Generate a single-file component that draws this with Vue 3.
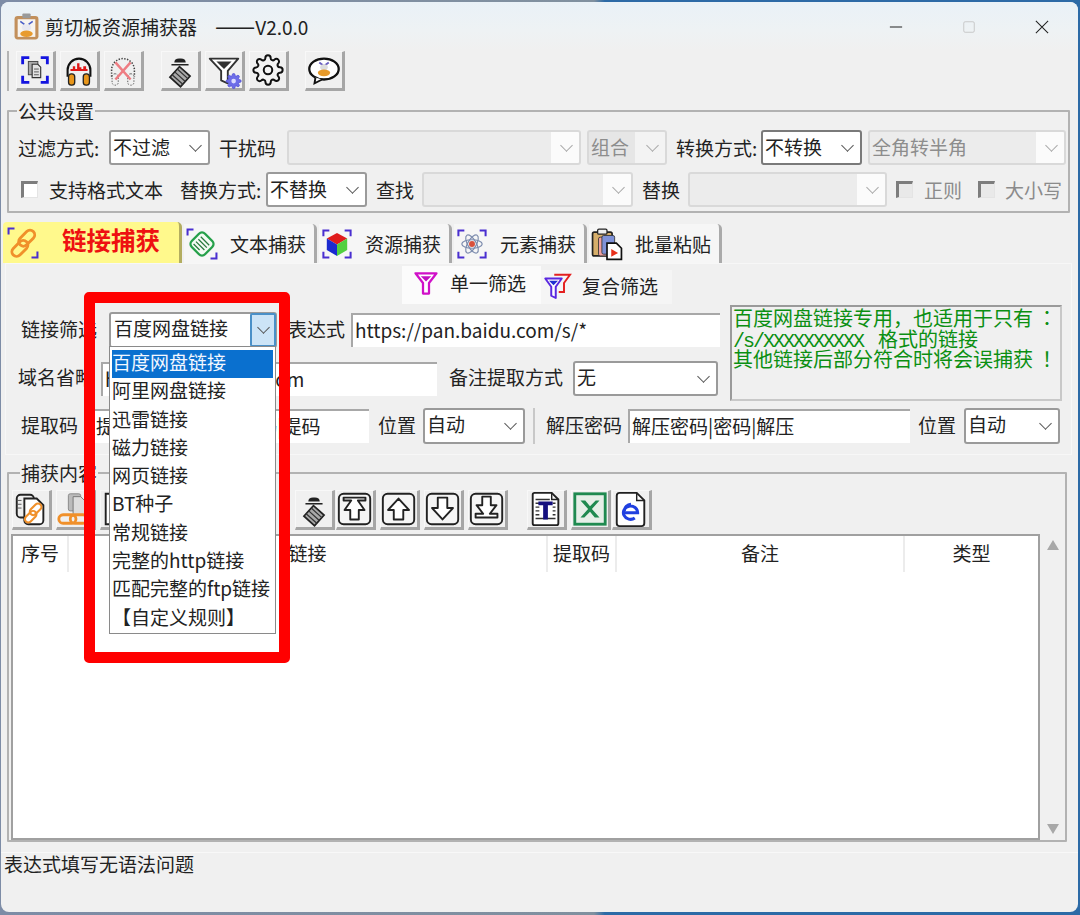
<template>
  <div class="desktop">
    <div class="window">
      <div class="titlebar">
        <svg class="logo" viewBox="0 0 24 26" v-html="icons.logo"></svg>
        <span class="app-name">剪切板资源捕获器</span>
        <span class="version"><span class="dash">——</span>V2.0.0</span>
        <div class="win-controls">
          <svg viewBox="0 0 16 16"><path d="M1 8h14" stroke="#222" stroke-width="1.2" /></svg>
          <svg viewBox="0 0 16 16"><rect x="2" y="2" width="12" height="12" rx="1.5" fill="none" stroke="#c4c4c4" /></svg>
          <svg viewBox="0 0 16 16"><path d="M1 1l14 14M15 1L1 15" stroke="#222" stroke-width="1.2" /></svg>
        </div>
      </div>

      <div class="toolbar top-tools">
        <i class="grip"></i>
        <button v-for="b in topTools" :key="b.icon" class="tool" :class="{ sep: b.sep }">
          <svg viewBox="0 0 40 40" v-html="icons[b.icon]"></svg>
        </button>
      </div>

      <fieldset class="group common">
        <legend>公共设置</legend>
        <div class="row">
          <span class="lb w85">过滤方式:</span>
          <div class="sel w101">不过滤</div>
          <span class="lb w65 ind3">干扰码</span>
          <div class="sel off w294"></div>
          <div class="sel off combo w80"><em>组合</em></div>
          <span class="lb w82 ind3">转换方式:</span>
          <div class="sel w101 dark">不转换</div>
          <div class="sel off w198"><em>全角转半角</em></div>
        </div>
        <div class="row second">
          <i class="check"></i>
          <span class="lb w130 ind5">支持格式文本</span>
          <span class="lb w80">替换方式:</span>
          <div class="sel w101">不替换</div>
          <span class="lb w43 ind3">查找</span>
          <div class="sel off w211"></div>
          <span class="lb w43 ind3">替换</span>
          <div class="sel off w199"></div>
          <i class="check off"></i>
          <span class="lb w48 ind5 dim">正则</span>
          <i class="check off"></i>
          <span class="lb w62 ind4 dim">大小写</span>
        </div>
      </fieldset>

      <div class="tabs">
        <div class="tab active">
          <svg viewBox="0 0 40 40" v-html="icons.tabLink"></svg>
          <span>链接捕获</span>
        </div>
        <div v-for="t in tabs" :key="t.label" class="tab">
          <svg viewBox="0 0 40 40" v-html="icons[t.icon]"></svg>
          <span>{{ t.label }}</span>
        </div>
      </div>

      <section class="panel">
        <div class="subtabs">
          <div class="subtab on">
            <svg viewBox="0 0 40 40" v-html="icons.funnel"></svg>
            <span>单一筛选</span>
          </div>
          <div class="subtab">
            <svg viewBox="0 0 40 40" v-html="icons.funnels"></svg>
            <span>复合筛选</span>
          </div>
        </div>

        <div class="filter-top">
          <div class="filter-left">
            <div class="row">
              <span class="lb w84 ind2">链接筛选</span>
              <div class="sel focused w168">百度网盘链接</div>
              <span class="lb w62 ind5">表达式</span>
              <div class="input w369">https://pan.baidu.com/s/*</div>
            </div>
            <div class="row mid">
              <span class="lb w77">域名省略</span>
              <div class="input slim w336">https://pan.baidu.com</div>
              <span class="lb w124 ind6">备注提取方式</span>
              <div class="sel w145">无</div>
            </div>
          </div>
          <div class="hint">
            <p>百度网盘链接专用，也适用于只有<span class="tc">：</span></p>
            <p><span class="mono">/s/XXXXXXXXXX </span><span class="nudge">格式的链接</span></p>
            <p>其他链接后部分符合时将会误捕获<span class="tc">！</span></p>
          </div>
        </div>

        <div class="row third">
          <span class="lb w67 ind2">提取码</span>
          <div class="input w277">提取码|访问码|验证码|提码</div>
          <span class="lb w42 ind3">位置</span>
          <div class="sel w102">自动</div>
          <i class="divider"></i>
          <span class="lb w81 ind5">解压密码</span>
          <div class="input w282">解压密码|密码|解压</div>
          <span class="lb w42 ind2">位置</span>
          <div class="sel w96">自动</div>
        </div>
      </section>

      <fieldset class="group captured">
        <legend>捕获内容</legend>
        <div class="toolbar list-tools">
          <button v-for="(b, i) in listTools" :key="i" class="tool" :class="b.cls">
            <svg viewBox="0 0 40 40" v-html="icons[b.icon]"></svg>
          </button>
        </div>
        <div class="table-wrap">
          <div class="table">
            <div class="thead">
              <span>序号</span>
              <span>链接</span>
              <span>提取码</span>
              <span>备注</span>
              <span>类型</span>
            </div>
          </div>
          <div class="scrollbar">
            <i class="arrow up"></i>
            <i class="arrow down"></i>
          </div>
        </div>
      </fieldset>

      <div class="status">表达式填写无语法问题</div>
    </div>

    <ul class="popup">
      <li v-for="(item, i) in options" :key="item" :class="{ selected: i === 0 }">{{ item }}</li>
    </ul>
    <div class="callout"></div>
  </div>
</template>

<script setup>
const brackets = (c = '#4a2fd0') =>
  `<path d="M4 11V4h7M29 4h7v7M36 29v7h-7M11 36H4v-7" fill="none" stroke="${c}" stroke-width="2.4"/>`

// the link and text tabs only carry the top-left and bottom-right marks
const halfBrackets = (c = '#4a2fd0') =>
  `<path d="M3 10V3h7M37 30v7h-7" fill="none" stroke="${c}" stroke-width="2.4"/>`

const gear =
  'M19.4 15a1.65 1.65 0 0 0 .33 1.82l.06.06a2 2 0 0 1 0 2.83 2 2 0 0 1-2.83 0l-.06-.06a1.65 1.65 0 0 0-1.82-.33 1.65 1.65 0 0 0-1 1.51V21a2 2 0 0 1-2 2 2 2 0 0 1-2-2v-.09A1.65 1.65 0 0 0 9 19.4a1.65 1.65 0 0 0-1.82.33l-.06.06a2 2 0 0 1-2.83 0 2 2 0 0 1 0-2.83l.06-.06a1.65 1.65 0 0 0 .33-1.82 1.65 1.65 0 0 0-1.51-1H3a2 2 0 0 1-2-2 2 2 0 0 1 2-2h.09A1.65 1.65 0 0 0 4.6 9a1.65 1.65 0 0 0-.33-1.82l-.06-.06a2 2 0 0 1 0-2.83 2 2 0 0 1 2.83 0l.06.06a1.65 1.65 0 0 0 1.82.33H9a1.65 1.65 0 0 0 1-1.51V3a2 2 0 0 1 2-2 2 2 0 0 1 2 2v.09a1.65 1.65 0 0 0 1 1.51 1.65 1.65 0 0 0 1.82-.33l.06-.06a2 2 0 0 1 2.83 0 2 2 0 0 1 0 2.83l-.06.06a1.65 1.65 0 0 0-.33 1.82V9a1.65 1.65 0 0 0 1.51 1H21a2 2 0 0 1 2 2 2 2 0 0 1-2 2h-.09a1.65 1.65 0 0 0-1.51 1z'

const links = (c = '#f0902a') =>
  `<g fill="none" stroke="${c}" stroke-width="3.4"><rect x="5" y="21" width="22" height="11" rx="5.500" transform="rotate(-45 16 26)"/><rect x="13" y="9" width="22" height="11" rx="5.500" transform="rotate(-45 24 14)"/></g>`

const eraser = `<path d="M14 12q0-4 5-4h2q5 0 5 4z" fill="#222"/><path d="M11 14.5h18" stroke="#222" stroke-width="1.6"/>
  <g transform="rotate(42 20 27)"><rect x="12.5" y="19.5" width="15" height="15" fill="#a9a9a9" stroke="#222" stroke-width="1.8"/><path d="M12.5 23h15M12.5 27h15M12.5 31h15" stroke="#333" stroke-width="1.3"/></g>`

const frame = (d) =>
  `<rect x="3" y="4" width="33" height="32" rx="5" fill="#f5f5f5" stroke="#222" stroke-width="2"/><path d="${d}" fill="#fff" stroke="#222" stroke-width="2" stroke-linejoin="round"/>`

const icons = {
  logo: `<rect x="0.5" y="3" width="23" height="22.5" rx="3" fill="#c2905c"/><rect x="3.5" y="6" width="17" height="17" fill="#f7f4f0"/>
    <rect x="8" y="0.5" width="8" height="4.5" rx="1" fill="#9a9a9a"/><path d="M6 8l4 3M18 8l-4 3" stroke="#4c60c8" stroke-width="1.6"/>
    <ellipse cx="12" cy="14" rx="4.5" ry="3.2" fill="#e8e8f0"/><ellipse cx="12" cy="20" rx="6" ry="3.2" fill="#e89b2e"/>`,
  capture: `<path d="M7 14V7h7M26 7h7v7M33 26v7h-7M14 33H7v-7" fill="none" stroke="#1414e0" stroke-width="3"/>
    <rect x="13" y="11" width="10" height="14" fill="#aaa" stroke="#444"/><path d="M17 14h6l3 3v11H17z" fill="#e2e2e2" stroke="#333" stroke-width="1.2"/>
    <path d="M19 19h5M19 22h5M19 25h5" stroke="#555"/>`,
  phones: `<path d="M8 27V20a12 12 0 0 1 24 0v7" fill="none" stroke="#111" stroke-width="2.2"/>
    <path d="M11 21h18v-2h-1.500v-3h-3v3h-2v-2h-2v-4h-2.500v6h-2v-3h-2.500v3H11z" fill="#e01818"/>
    <rect x="9" y="24" width="6.500" height="12" rx="3" fill="#e8961a" stroke="#222" stroke-width="1.400"/><rect x="24.500" y="24" width="6.500" height="12" rx="3" fill="#e8961a" stroke="#222" stroke-width="1.400"/>`,
  phonesOff: `<path d="M8 27V20a12 12 0 0 1 24 0v7" fill="none" stroke="#444" stroke-width="1.600" stroke-dasharray="1.500 1.500"/>
    <rect x="8.500" y="24" width="6.500" height="12" rx="3" fill="none" stroke="#555" stroke-dasharray="1.500 1.500"/><rect x="25" y="24" width="6.500" height="12" rx="3" fill="none" stroke="#555" stroke-dasharray="1.500 1.500"/>
    <path d="M12 12l16 18M28 12L12 30" stroke="#ee7c82" stroke-width="2.600"/>`,
  eraser,
  filterGear: `<path d="M5 8h30L24 21v13l-7-3V21z" fill="#fff" stroke="#333" stroke-width="2" stroke-linejoin="round"/><path d="M12 11h16l-8 8z" fill="#333"/>
    <g transform="translate(21.500 23) scale(.72)"><path d="${gear}" fill="#6d6de8" stroke="#5454d8" stroke-width="1.200"/><circle cx="12" cy="12" r="3.400" fill="#dcdcff"/></g>`,
  gear: `<g transform="translate(3.200 3.200) scale(1.400)"><path d="${gear}" fill="#f4f4f4" stroke="#111" stroke-width="1.500"/><circle cx="12" cy="12" r="3.200" fill="none" stroke="#111" stroke-width="1.500"/></g>`,
  bubble: `<ellipse cx="20" cy="19" rx="15.500" ry="11" fill="#fff" stroke="#111" stroke-width="2.400"/><path d="M11 28l-1 6 8-4" fill="#fff" stroke="#111" stroke-width="2"/>
    <path d="M15 12l4 3M25 12l-4 3" stroke="#6a5fc0" stroke-width="2"/><ellipse cx="20" cy="17" rx="4" ry="3" fill="#ddd"/><ellipse cx="20" cy="23" rx="6.500" ry="3.500" fill="#e79a2a"/>`,
  tabLink: halfBrackets() + links(),
  tabText: `${halfBrackets()}<g transform="rotate(45 20 20)"><rect x="9" y="9" width="22" height="22" rx="5" fill="#f4fbf4" stroke="#26a04a" stroke-width="2.800"/><path d="M13 15h14M13 19h14M13 23h14M13 27h10" stroke="#2a7a3e" stroke-width="1.500"/></g>`,
  tabCube: `${brackets()}<path d="M20 7l12 6.500-12 7-12-7z" fill="#e01c1c"/><path d="M8 13.500l12 7V34L8 27z" fill="#1b2bd0"/><path d="M32 13.500l-12 7V34l12-7z" fill="#52d040"/>`,
  tabAtom: `${brackets()}<g fill="none" stroke="#7d8cae" stroke-width="1.400"><ellipse cx="20" cy="20" rx="12" ry="5"/><ellipse cx="20" cy="20" rx="12" ry="5" transform="rotate(60 20 20)"/><ellipse cx="20" cy="20" rx="12" ry="5" transform="rotate(120 20 20)"/></g><circle cx="20" cy="20" r="3.500" fill="#d8503c"/>`,
  tabPaste: `<rect x="3" y="6" width="23" height="28" rx="2" fill="#d6ae6a" stroke="#222" stroke-width="2"/><rect x="9" y="2.500" width="11" height="6" rx="1.500" fill="#eee" stroke="#222" stroke-width="1.500"/>
    <rect x="10" y="12" width="15" height="22" rx="2" fill="#f0a0a0" stroke="#333"/><rect x="14" y="10" width="15" height="22" rx="2" fill="#7f92d8" stroke="#333"/>
    <path d="M20 19h11l6 6v13H20z" fill="#fff" stroke="#111" stroke-width="2"/><path d="M25 26l8 4.500-8 4.500z" fill="#e8301c"/>`,
  funnel: `<path d="M6 7h28L24 20v14l-8 0V20z" fill="#fff" stroke="#d010c8" stroke-width="3" stroke-linejoin="round"/><path d="M13 11h14l-7 7z" fill="#c010c0"/>`,
  funnels: `<path d="M15 5h21l-8 11v12h-7" fill="none" stroke="#e42020" stroke-width="2.600"/><path d="M3 10h22l-8 11v15l-6-3V21z" fill="#fff" stroke="#5a28e0" stroke-width="2.600" stroke-linejoin="round"/><path d="M8 13h12l-6 6z" fill="#2030d0"/>`,
  copyLink: `<rect x="5" y="5" width="18" height="24" rx="4" fill="#eee" stroke="#222" stroke-width="2"/><path d="M5 11h5M5 15h5M5 19h5" stroke="#555"/>
    <path d="M13 9h13l7 7v16a4 4 0 0 1-4 4H17a4 4 0 0 1-4-4z" fill="#fff" stroke="#222" stroke-width="2"/>
    <g transform="translate(9 11) scale(.65)">${links()}</g>`,
  copyLine: `<rect x="13" y="4" width="13" height="18" rx="2" fill="#bbb" stroke="#888"/><path d="M18 7h8l5 5v14H18z" fill="#ddd" stroke="#777"/>
    <g fill="none" stroke="#f0902a" stroke-width="3"><rect x="3" y="26" width="18" height="9" rx="4.500"/><rect x="15" y="26" width="18" height="9" rx="4.500"/></g>`,
  doc: `<path d="M6 4h20l8 8v24H6z" fill="#fff" stroke="#222" stroke-width="2"/>`,
  top: frame('M8 8h23v3h-8l7 10h-6v10h-9V21H9l7-10H8z'),
  up: frame('M19.500 9l11 12h-6v10h-10V21h-6z'),
  down: frame('M14.500 8h10v11h6l-11 12-11-12h6z'),
  bottom: frame('M15 7h9v9h6l-7 9h8v4H8v-4h8l-7-9h6z'),
  textDoc: `<path d="M8 3h18l7 7v25a2 2 0 0 1-2 2H8a2 2 0 0 1-2-2V5a2 2 0 0 1 2-2z" fill="#fff" stroke="#222" stroke-width="2"/><path d="M26 3v7h7" fill="none" stroke="#222" stroke-width="1.500"/>
    <path d="M9 10h15M9 14h4M9 18h4M9 22h4M9 26h4M9 30h21M27 14h3M27 18h3M27 22h3M27 26h3" stroke="#333" stroke-width="1.500"/><path d="M12 12h15v4h-5v15h-5V16h-5z" fill="#15107e"/>`,
  excel: `<rect x="4" y="4" width="32" height="32" fill="#e6efe8" stroke="#1f8a50" stroke-width="3"/><path d="M10 11h5l5 6 6-6h4l-8 9 8 9h-5l-5-6-6 6h-4l8-9z" fill="#1f8a50"/>`,
  ieDoc: `<path d="M8 3h18l8 8v24a3 3 0 0 1-3 3H8a3 3 0 0 1-3-3V6a3 3 0 0 1 3-3z" fill="#fff" stroke="#222" stroke-width="2"/><path d="M26 3v8h8" fill="none" stroke="#222" stroke-width="1.500"/>
    <path d="M12 24h15a7.500 7 0 1 0-3 5.500M13 22a7.500 7 0 0 1 7-7" fill="none" stroke="#2040e0" stroke-width="3.200"/>`,
}

const topTools = [
  { icon: 'capture' },
  { icon: 'phones' },
  { icon: 'phonesOff' },
  { icon: 'eraser', sep: true },
  { icon: 'filterGear' },
  { icon: 'gear' },
  { icon: 'bubble', sep: true },
]

const tabs = [
  { label: '文本捕获', icon: 'tabText' },
  { label: '资源捕获', icon: 'tabCube' },
  { label: '元素捕获', icon: 'tabAtom' },
  { label: '批量粘贴', icon: 'tabPaste' },
]

const listTools = [
  { icon: 'copyLink' },
  { icon: 'copyLine' },
  { icon: 'doc' },
  { icon: 'doc' },
  { icon: 'doc' },
  { icon: 'doc' },
  { icon: 'eraser', cls: 'sep-wide' },
  { icon: 'top', cls: 'pull' },
  { icon: 'up' },
  { icon: 'down' },
  { icon: 'bottom' },
  { icon: 'textDoc', cls: 'sep-mid' },
  { icon: 'excel' },
  { icon: 'ieDoc', cls: 'pull' },
]

const options = [
  '百度网盘链接',
  '阿里网盘链接',
  '迅雷链接',
  '磁力链接',
  '网页链接',
  'BT种子',
  '常规链接',
  '完整的http链接',
  '匹配完整的ftp链接',
  '【自定义规则】',
]
</script>

<style>
html,
body {
  margin: 0;
  background: #35608e;
}
</style>

<style scoped>
.desktop {
  position: relative;
  width: 1080px;
  height: 915px;
  overflow: hidden;
  padding: 2px 2px 3px 1px;
  box-sizing: border-box;
  background: linear-gradient(90deg, #7d8ca6 0%, #80909f 55%, #2c6aa6 56%);
  font-family: "Noto Sans CJK SC", "Noto Sans", sans-serif;
  font-size: 19px;
  color: #222;
}
.window {
  height: 100%;
  display: flex;
  flex-direction: column;
  border-radius: 8px;
  background: #f0f0f0;
  overflow: hidden;
}

.titlebar {
  flex: none;
  height: 48px;
  display: flex;
  align-items: center;
  box-sizing: border-box;
  padding: 1px 0 0 13px;
  background: linear-gradient(180deg, #e9f1f7 0%, #eef2f4 60%, #f0f0f0 100%);
  line-height: 26px;
}
.logo {
  width: 25px;
  height: 27px;
  margin-right: 6px;
}
.version {
  margin-left: 18px;
}
.dash {
  font-size: 24px;
  line-height: 1;
}
.win-controls {
  margin-left: auto;
  display: flex;
  align-items: center;
  gap: 59px;
  padding-right: 29px;
}
.win-controls svg {
  width: 14px;
  height: 14px;
}

.toolbar {
  display: flex;
  gap: 4px;
}
.top-tools {
  flex: none;
  height: 42px;
  padding-left: 6px;
}
.grip {
  width: 2px;
  height: 40px;
  margin-right: 3px;
  background: #b4b4b4;
  margin-top: 1px;
}
.tool {
  flex: none;
  width: 40px;
  height: 40px;
  padding: 0;
  box-sizing: border-box;
  background: #f0f0f0;
  border-style: solid;
  border-width: 1px 3px 3px 1px;
  border-color: #f8f8f8 #a6a6a6 #a6a6a6 #f8f8f8;
  display: flex;
  align-items: center;
  justify-content: center;
}
.tool svg {
  flex: none;
  width: 38px;
  height: 38px;
}
.top-tools .tool {
  margin-top: 1px;
}
.top-tools .tool.sep {
  margin-left: 12.5px;
}

.group {
  margin: 0 8px 0 6px;
  min-width: 0;
  padding: 0;
  border: 2px solid #b2b2b2;
  border-radius: 1px;
}
.group legend {
  margin-left: 8px;
  padding: 0 1px;
  line-height: 24px;
}
.common {
  flex: none;
  margin-top: 7px;
  padding: 7px 0 4px;
}

.row {
  display: flex;
  align-items: center;
  gap: 6px;
  height: 35px;
}
.common .row {
  padding-left: 9px;
}
.common .second {
  margin-top: 7px;
  padding-left: 12px;
}
.lb {
  flex: none;
  white-space: nowrap;
  line-height: 24px;
  box-sizing: border-box;
}
.panel .lb {
  padding-bottom: 3px;
}
.ind2 { padding-left: 2px; }
.ind3 { padding-left: 3px; }
.ind4 { padding-left: 4px; }
.ind5 { padding-left: 5px; }
.ind6 { padding-left: 6px; }
.dim { color: #8b8b8b; }
.w42 { width: 42px; }
.w43 { width: 43px; }
.w48 { width: 48px; }
.w62 { width: 62px; }
.w65 { width: 65px; }
.w67 { width: 67px; }
.w77 { width: 77px; }
.w80 { width: 80px; }
.w81 { width: 81px; }
.w82 { width: 82px; }
.w84 { width: 84px; }
.w85 { width: 85px; }
.w96 { width: 96px; }
.w101 { width: 101px; }
.w102 { width: 102px; }
.w124 { width: 124px; }
.w130 { width: 130px; }
.w145 { width: 145px; }
.w168 { width: 168px; }
.w198 { width: 198px; }
.w199 { width: 199px; }
.w211 { width: 211px; }
.w277 { width: 277px; }
.w282 { width: 282px; }
.w294 { width: 294px; }
.w336 { width: 336px; }
.w369 { width: 369px; }

.sel {
  position: relative;
  flex: none;
  height: 35px;
  box-sizing: border-box;
  padding-left: 2px;
  border: 2px solid #9a9a9a;
  border-radius: 3px;
  background: #fff;
  line-height: 30px;
  white-space: nowrap;
}
.panel .sel {
  line-height: 28px;
}
.sel::after {
  content: "";
  position: absolute;
  right: 8px;
  top: 9px;
  width: 8px;
  height: 8px;
  border-right: 1.5px solid #555;
  border-bottom: 1.5px solid #555;
  transform: rotate(45deg);
}
.sel.dark {
  border-color: #7a7a7a;
}
.sel.off {
  border-color: #d9d9d9;
  background: linear-gradient(90deg, #ececec calc(100% - 28px), #fbfbfb 0);
}
.sel.off::after {
  border-color: #a8a8a8;
}
.sel.off em {
  font-style: normal;
  color: #8d8d8d;
}
.sel.combo {
  background: linear-gradient(90deg, #e6e6e6 calc(100% - 30px), #f3f3f3 0);
}
.sel.focused {
  height: 36px;
  padding-left: 3px;
}
.sel.focused::before {
  content: "";
  position: absolute;
  top: -1px;
  right: -1px;
  bottom: -1px;
  width: 26px;
  box-sizing: border-box;
  border: 2px solid #4a90c8;
  border-radius: 2px;
  background: #cce4f7;
}
.sel.focused::after {
  right: 7px;
  z-index: 1;
}

.check {
  flex: none;
  width: 17px;
  height: 17px;
  box-sizing: border-box;
  border-style: solid;
  border-width: 3px 1px 1px 3px;
  border-color: #7d7d7d #e4e4e4 #e4e4e4 #7d7d7d;
  background: #fff;
}
.check.off {
  background: #e9e9e9;
}
.second .check.off {
  margin-left: 3px;
}
.second .check.off + .dim + .check.off {
  margin-left: 5px;
}

.tabs {
  flex: none;
  display: flex;
  align-items: flex-end;
  gap: 2px;
  height: 41px;
  margin-top: 9px;
  padding-left: 2px;
}
.tab {
  width: 133px;
  height: 39px;
  box-sizing: border-box;
  display: flex;
  align-items: center;
  padding-left: 1px;
  background: #f6f6f6;
  border-right: 3px solid #aaa;
  border-top-right-radius: 5px;
  line-height: 24px;
  white-space: nowrap;
}
.tab svg {
  width: 34px;
  height: 34px;
  margin-right: 11px;
}
.tab.active {
  width: 179px;
  height: 41px;
  padding: 0 0 5px 3px;
  background: #fff98c;
  border-right-color: #b3ad60;
  border-top-left-radius: 4px;
  color: #ee1111;
  font-size: 24.500px;
  font-weight: 700;
}
.tab.active svg {
  margin-right: 22px;
  margin-top: 5px;
}

.panel {
  flex: none;
  margin: 0 6px 0 4px;
  height: 192px;
  box-sizing: border-box;
  border: 1px solid #f7f7f7;
}
.subtabs {
  display: flex;
  align-items: flex-end;
  height: 40px;
  padding-left: 396px;
}
.subtab {
  width: 131px;
  height: 34px;
  display: flex;
  align-items: center;
  padding: 0 0 2px 2px;
  box-sizing: border-box;
  background: #f5f5f5;
  line-height: 24px;
}
.subtab.on {
  width: 139px;
  height: 38px;
  padding: 0 0 4px 9px;
  background: #fbfbfb;
}
.subtab svg {
  width: 30px;
  height: 30px;
  margin-right: 9px;
}

.filter-top {
  display: flex;
  height: 97px;
  margin-top: 1px;
}
.filter-left {
  padding-top: 7px;
  width: 724px;
}
.filter-left .row {
  padding-left: 13px;
}
.filter-left .row:first-child {
  height: 36px;
}
.filter-left .mid {
  margin: 13px 0 0 -1px;
}
.input {
  flex: none;
  height: 34px;
  box-sizing: border-box;
  padding-left: 2px;
  border-top: 2px solid #a8a8a8;
  border-left: 2px solid #a8a8a8;
  background: #fff;
  line-height: 29px;
  white-space: nowrap;
  overflow: hidden;
}
.hint {
  flex: none;
  width: 332px;
  height: 96px;
  box-sizing: border-box;
  padding: 1px 0 0 1px;
  border-top: 2px solid #9a9a9a;
  border-left: 2px solid #9a9a9a;
  border-right: 2px solid #c8c8c8;
  border-bottom: 2px solid #c8c8c8;
  color: #0b8f12;
  font-size: 20px;
}
.hint p {
  margin: 0;
  height: 20.500px;
  line-height: 20.500px;
  white-space: nowrap;
}
.tc {
  margin-left: 4px;
  font-family: "Noto Sans CJK TC", sans-serif;
}
.mono {
  font-family: "Liberation Mono", monospace;
  font-size: 20px;
  letter-spacing: -2px;
  white-space: pre;
}
.nudge {
  margin-left: 5px;
}
.third {
  margin-top: 6px;
  padding-left: 13px;
  height: 36px;
}
.third .sel {
  height: 36px;
}
.divider {
  flex: none;
  width: 2px;
  height: 36px;
  margin-left: 2px;
  background: #c8c8c8;
}

.captured {
  flex: none;
  margin-top: 6px;
  margin-right: 11px;
  padding: 5px 0 0 3px;
  height: 381px;
  box-sizing: border-box;
}
.list-tools {
  height: 42px;
}
.list-tools .tool.sep-wide {
  margin-left: 19px;
}
.list-tools .tool.sep-mid {
  margin-left: 15px;
}
.list-tools .tool.pull {
  margin-left: -3px;
}
.table-wrap {
  display: flex;
  height: 306px;
  margin: 2px 0 0 -1px;
}
.table {
  flex: none;
  width: 1029px;
  box-sizing: border-box;
  background: #fff;
  border: 2px solid #a0a0a0;
}
.thead {
  display: grid;
  grid-template-columns: 56px 479px 69px 288px 1fr;
  height: 36px;
}
.thead span {
  border-right: 2px solid #ececec;
  text-align: center;
  line-height: 34px;
}
.thead span:last-child {
  border-right: 0;
}
.scrollbar {
  flex: 1;
  position: relative;
}
.arrow {
  position: absolute;
  left: 7px;
  width: 0;
  height: 0;
  border-left: 6px solid transparent;
  border-right: 6px solid transparent;
}
.arrow.up {
  top: 6px;
  border-bottom: 10px solid #a8a8a8;
}
.arrow.down {
  bottom: 6px;
  border-top: 10px solid #a8a8a8;
}

.status {
  flex: 1;
  margin-top: 10px;
  padding-left: 3px;
  border-top: 1px solid #f8f8f8;
  line-height: 22px;
}

.popup {
  position: absolute;
  left: 109px;
  top: 346px;
  width: 167px;
  height: 288px;
  margin: 0;
  padding: 3px 2px;
  box-sizing: border-box;
  list-style: none;
  background: #fff;
  border: 1px solid #8a8a8a;
}
.popup li {
  height: 28.300px;
  line-height: 23px;
  white-space: nowrap;
}
.popup li.selected {
  background: #0a70cf;
  color: #f2f7ff;
}

.callout {
  position: absolute;
  left: 84px;
  top: 292px;
  width: 206px;
  height: 371px;
  box-sizing: border-box;
  border: 11px solid #ff0000;
  border-radius: 5px;
}
</style>
